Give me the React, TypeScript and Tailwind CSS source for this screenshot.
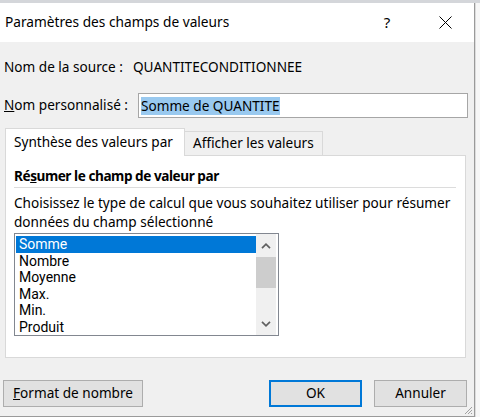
const FONT = "font-['Noto_Sans',sans-serif]";

const FUNCTIONS = ['Somme', 'Nombre', 'Moyenne', 'Max.', 'Min.', 'Produit'];

function Chevron({ up }: { up?: boolean }) {
  return (
    <svg width="10" height="6" viewBox="0 0 10 6">
      <path
        d={up ? 'M1 5.2 L5 1.2 L9 5.2' : 'M1 0.8 L5 4.8 L9 0.8'}
        fill="none"
        stroke="#606060"
        strokeWidth="1.7"
      />
    </svg>
  );
}

function FunctionList() {
  return (
    <div className="mt-[2px] w-[265px] h-[103px] border border-[#828790] bg-white flex overflow-hidden">
      <div className="w-[241px] pl-[1px] pt-[2px] font-['Roboto',sans-serif] text-[14px]">
        {FUNCTIONS.map((f, i) => (
          <div
            key={f}
            className={`h-[16.5px] flex items-center pl-[3px] ${
              i === 0 ? 'bg-[#0078d7] text-white' : 'text-black'
            }`}
          >
            <span className="leading-[14px]">{f}</span>
          </div>
        ))}
      </div>
      {/* scrollbar */}
      <div className="w-[20px] bg-[#f0f0f0] flex flex-col">
        <div className="h-[23px] flex items-center justify-center">
          <Chevron up />
        </div>
        <div className="h-[31px] bg-[#cdcdcd]" />
        <div className="flex-1" />
        <div className="h-[22px] flex items-center justify-center">
          <Chevron />
        </div>
      </div>
    </div>
  );
}

function Dialog() {
  return (
    <div className="relative w-[475px] h-[414px] border-r border-b border-[#9a9a9a] flex flex-col bg-[#f0f0f0]">
      {/* Title bar */}
      <div className="h-[39px] bg-white flex items-center pl-[5px]">
        <span className="flex-1 text-[13.7px]">Paramètres des champs de valeurs</span>
        <span className="w-[46px] mr-[12px] text-center text-[15px]">?</span>
        <span className="w-[46px] mr-[6px] flex justify-center">
          <svg width="13" height="13" viewBox="0 0 13 13">
            <path d="M0.5 0.5 L12.5 12.5 M12.5 0.5 L0.5 12.5" stroke="#000" strokeWidth="1" />
          </svg>
        </span>
      </div>

      {/* Source */}
      <div className="mt-[16px] h-[18px] flex items-center pl-[4px]">
        <span className="w-[129px]">Nom de la source :</span>
        <span>QUANTITECONDITIONNEE</span>
      </div>

      {/* Custom name */}
      <div className="mt-[17px] h-[25px] flex items-center pl-[4px]">
        <span className="w-[134px]">
          <u>N</u>om personnalisé :
        </span>
        <div className="w-[330px] h-[25px] border border-[#a6a6a6] bg-white flex items-center pl-[2px]">
          <span className="bg-[#99c9ef] leading-[18px]">Somme de QUANTITE</span>
        </div>
      </div>

      {/* Tabs */}
      <div className="mt-[10px] ml-[5px] h-[27px] flex items-end relative z-10">
        <div className="w-[180px] h-[28px] -mb-px bg-white border border-b-0 border-[#d9d9d9] flex items-center pl-[8px]">
          Synthèse des valeurs par
        </div>
        <div className="w-[138px] h-[24px] border-t border-r border-[#d9d9d9] flex items-center pl-[8px]">
          Afficher les valeurs
        </div>
      </div>

      {/* Panel */}
      <div className="ml-[5px] w-[461px] h-[203px] border border-[#d9d9d9] bg-white px-[8px] pt-[11px]">
        <div className="h-[18px] leading-[18px] font-bold tracking-[-0.45px]">
          Ré<u>s</u>umer le champ de valeur par
        </div>
        <div className="mt-[2px] h-px w-[442px] bg-[#dcdcdc]" />
        <p className="mt-[5px] leading-[19px] whitespace-nowrap">
          Choisissez le type de calcul que vous souhaitez utiliser pour résumer
          <br />
          données du champ sélectionné
        </p>
        <FunctionList />
      </div>

      {/* Buttons */}
      <div className="mt-[22px] flex pl-[3px] pr-[7px]">
        <button className="w-[140px] h-[27px] bg-[#e1e1e1] border border-[#adadad]">
          <u>F</u>ormat de nombre
        </button>
        <button className="ml-auto w-[93px] h-[27px] bg-[#e1e1e1] border-2 border-[#0078d7]">
          OK
        </button>
        <button className="ml-[12px] w-[93px] h-[27px] bg-[#e1e1e1] border border-[#adadad]">
          Annuler
        </button>
      </div>

      {/* resize grip */}
      <svg className="absolute right-[1px] bottom-[1px]" width="10" height="10" viewBox="0 0 10 10">
        <path d="M9 2 L2 9 M9 5 L5 9 M9 8 L8 9" stroke="#a0a0a0" strokeWidth="1" />
      </svg>
    </div>
  );
}

export default function App() {
  return (
    <div className={`w-[480px] h-[419px] bg-[#f4f4f4] overflow-hidden text-[13.6px] text-black ${FONT}`}>
      <div className="h-[3px] bg-[#d4d6da]" />
      <div className="flex">
        <Dialog />
        <div className="flex-1 h-[414px] border-l border-[#dcdcdc] bg-[#f7f7f7]" />
      </div>
      <div className="h-[2px] bg-white" />
    </div>
  );
}
